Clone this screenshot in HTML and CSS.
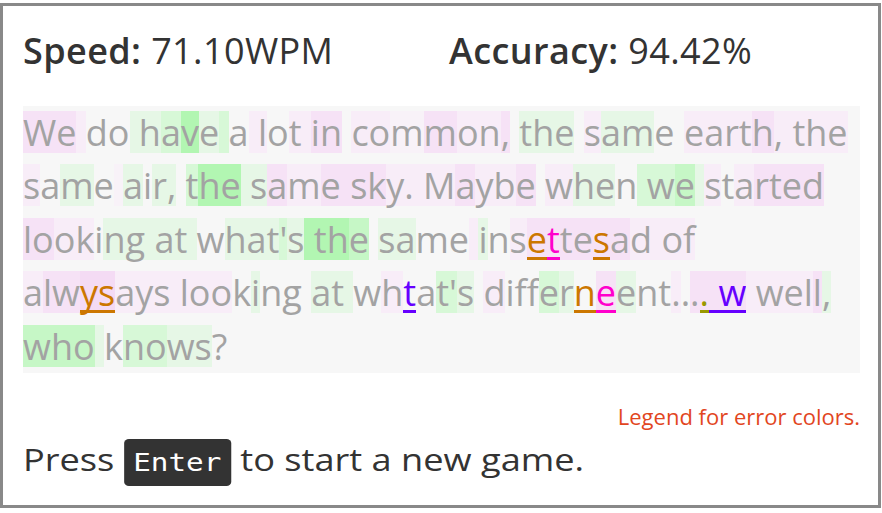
FILE: index.html
```html
<!DOCTYPE html>
<html>
<head>
<meta charset="utf-8">
<link rel="stylesheet" href="styles.css">
</head>
<body>
<div class="game">
  <div class="stats">
    <div class="stat stat-speed"><b>Speed:</b> 71.10WPM</div>
    <div class="stat"><b>Accuracy:</b> 94.42%</div>
  </div>
  <div class="text"><span class="p2">We</span><span class="p1"> </span>do<span class="g1"> h</span><span class="g2">a</span><span class="g4">v</span><span class="g1">e</span><span class="g2"> </span>a<span class="p1"> l</span>o<span class="p1">t </span><span class="p2">in</span> <span class="p1">co</span><span class="p0">m</span><span class="p2">m</span><span class="p1">on</span><span class="p2">,</span> <span class="g1">the</span> <span class="p1">s</span><span class="g1">am</span>e <span class="p1">eart</span><span class="p2">h</span><span class="p1">, the</span><br><span class="p1">s</span>a<span class="g1">m</span>e<span class="p0"> </span><span class="g1">a</span>i<span class="g1">r,</span> <span class="g2">t</span><span class="g4">he</span><span class="g1"> s</span><span class="p2">a</span><span class="p1">m</span><span class="p2">e sk</span><span class="p1">y. M</span><span class="p2">a</span><span class="p1">yb</span><span class="p2">e</span> <span class="p1">w</span><span class="g1">he</span>n<span class="g2"> w</span><span class="g3">e</span><span class="g1"> </span><span class="p1">s</span>t<span class="p1">a</span><span class="p2">rted</span><br><span class="p2">lo</span><span class="p1">ok</span>i<span class="g1">ng at </span>w<span class="g1">hat</span><span class="g2">'</span><span class="g1">s</span><span class="g4"> th</span><span class="g3">e</span> <span class="g1">sa</span>me<span class="p1"> </span><span class="g1">i</span>n<span class="p1">s</span><span class="p2"><span class="eo">e</span><span class="em">t</span>te<span class="eo">s</span>a</span><span class="p1">d of</span><br><span class="p1">a</span><span class="p2">lw</span><span class="p3 eo">ys</span><span class="p1">ays loo</span>k<span class="g1">i</span>ng <span class="g1">at </span>w<span class="p1">h</span><span class="ep">t</span>a<span class="g2">t'</span><span class="g1">s</span> <span class="p1">d</span>if<span class="g2">fe</span><span class="g1">r</span><span class="eo">n</span><span class="p2 em">e</span><span class="g1">e</span>nt<span class="p1">.</span>.<span class="p2">.</span><span class="p2 ey">.</span><span class="p2 ep"> w</span><span class="p1"> wel</span><span class="p2">l</span><span class="g1">,</span><br><span class="g3">who</span><span class="g1"> </span>k<span class="g2">no</span><span class="g1">ws</span>?</div>
  <div class="legend">Legend for error colors.</div>
  <div class="prompt">Press <kbd class="key">Enter</kbd> to start a new game.</div>
</div>
</body>
</html>
```
FILE: styles.css
```css
html, body {
  margin: 0;
  padding: 0;
  background: #fff;
}
body {
  font-family: "Open Sans", "Noto Sans", sans-serif;
  color: #333;
}
.game {
  box-sizing: border-box;
  margin: 3px 1px 0 0;
  height: 505px;
  border: 3px solid #898989;
  padding: 20px 18px 0 20px;
  overflow: hidden;
}
.stats {
  display: flex;
  font-size: 36px;
  line-height: 49px;
  letter-spacing: 0.4px;
  color: #333;
}
.stats b {
  font-weight: 600;
}
.stat-speed {
  width: 426px;
}
.text {
  margin-top: 31px;
  background: #f7f7f7;
  color: #a3a3a3;
  font-size: 36px;
  line-height: 53.4px;
}
.text span {
  background-image:
    linear-gradient(to bottom, transparent 42px, var(--ul, transparent) 42px, var(--ul, transparent) 45px, transparent 45px),
    linear-gradient(to bottom, transparent 3.5px, var(--bg, transparent) 3.5px, var(--bg, transparent) 45px, transparent 45px);
}
.p0 { --bg: #f8f2f8; }
.p1 { --bg: #f8edf8; }
.p2 { --bg: #f6e2f6; }
.p3 { --bg: #f4dbf4; }
.g1 { --bg: #e6f7e6; }
.g2 { --bg: #d7f8d7; }
.g3 { --bg: #c6f7c6; }
.g4 { --bg: #b2f6b2; }
.eo { color: #cc7700; --ul: #cc7700; }
.em { color: #ff00cc; --ul: #ff00cc; }
.ep { color: #6600ff; --ul: #6600ff; }
.ey { color: #999900; --ul: #999900; }
.legend {
  margin-top: 28px;
  text-align: right;
  color: #e2461e;
  font-size: 22px;
  line-height: 30px;
}
.prompt {
  margin-top: 5px;
  font-size: 30.4px;
  line-height: 47px;
  color: #333;
  transform: scaleX(1.19);
  transform-origin: left center;
}
.key {
  display: inline-block;
  background: #333;
  color: #fff;
  font-family: "DejaVu Sans Mono", monospace;
  font-size: 24.6px;
  line-height: 47px;
  padding: 0 8px;
  border-radius: 4px;
}
```
